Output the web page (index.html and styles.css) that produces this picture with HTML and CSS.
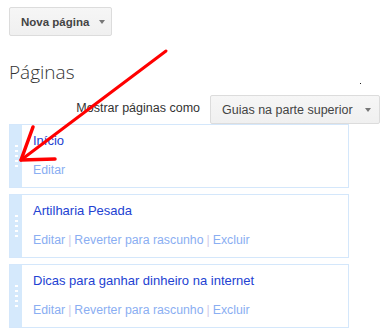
FILE: index.html
```html
<!DOCTYPE html>
<html lang="pt">

<head>
    <meta charset="UTF-8">
    <meta name="viewport" content="width=device-width, initial-scale=1.0">
    <title>Páginas</title>
    <link rel="stylesheet" href="styles.css">
</head>

<body>
    <div class="page">
        <button class="btn btn-new">Nova página <span class="caret"></span></button>

        <h2 class="heading">Páginas</h2>

        <div class="layout-row">
            <span class="layout-label">Mostrar páginas como</span>
            <button class="btn btn-layout">Guias na parte superior <span class="caret"></span></button>
        </div>

        <ul class="pages">
            <li class="page-item">
                <div class="handle"><i></i><i></i><i></i><i></i><i></i></div>
                <div class="page-body">
                    <a class="page-title" href="#">Início</a>
                    <div class="actions"><a href="#">Editar</a></div>
                </div>
            </li>
            <li class="page-item">
                <div class="handle"><i></i><i></i><i></i><i></i><i></i></div>
                <div class="page-body">
                    <a class="page-title" href="#">Artilharia Pesada</a>
                    <div class="actions">
                        <a href="#">Editar</a><span class="sep">|</span><a href="#">Reverter para rascunho</a><span class="sep">|</span><a href="#">Excluir</a>
                    </div>
                </div>
            </li>
            <li class="page-item">
                <div class="handle"><i></i><i></i><i></i><i></i><i></i></div>
                <div class="page-body">
                    <a class="page-title" href="#">Dicas para ganhar dinheiro na internet</a>
                    <div class="actions">
                        <a href="#">Editar</a><span class="sep">|</span><a href="#">Reverter para rascunho</a><span class="sep">|</span><a href="#">Excluir</a>
                    </div>
                </div>
            </li>
        </ul>
        <div class="dotted"></div>
    </div>

    <!-- red annotation arrow drawn over the screenshot -->
    <svg class="arrow" width="388" height="334" viewBox="0 0 388 334">
        <polyline points="166,51 21,160" fill="none" stroke="#f00" stroke-width="3" stroke-linecap="round" />
        <polyline points="33,127 21,160 55,159" fill="none" stroke="#f00" stroke-width="3.5" stroke-linecap="round" stroke-linejoin="round" />
        <rect x="360" y="83" width="1" height="1" fill="#222" />
    </svg>
</body>

</html>
```

FILE: styles.css
```css
body {
    margin: 0;
    background: #fff;
    font-family: "Liberation Sans", Arial, sans-serif;
}

.page {
    padding: 7px 8px 0 9px;
}

.btn {
    display: inline-flex;
    align-items: center;
    height: 29px;
    border: 1px solid #dcdcdc;
    border-radius: 2px;
    background: linear-gradient(#f6f6f6, #f0f0f0);
    color: #444;
    font-family: "Liberation Sans", Arial, sans-serif;
    cursor: pointer;
}

.btn-new {
    width: 103px;
    padding: 0 0 0 11px;
    font-size: 11.5px;
    font-weight: bold;
}

.btn-new .caret {
    margin-left: 10px;
}

.btn-layout {
    width: 170px;
    padding: 0 0 0 11px;
    font-size: 12.5px;
}

.btn-layout .caret {
    margin-left: 12px;
}

.caret {
    width: 0;
    height: 0;
    border-left: 3.5px solid transparent;
    border-right: 3.5px solid transparent;
    border-top: 4px solid #777;
}

.heading {
    margin: 24px 0 0;
    height: 24px;
    line-height: 24px;
    font-family: "Open Sans", sans-serif;
    font-size: 19px;
    font-weight: 300;
    color: #333;
}

.layout-row {
    display: flex;
    justify-content: flex-end;
    align-items: flex-start;
    margin-top: 11px;
}

.layout-label {
    padding-top: 6px;
    margin-right: 10px;
    font-size: 12.5px;
    color: #333;
}

.pages {
    list-style: none;
    margin: 0;
    padding: 0;
    width: 340px;
}

.page-item {
    display: flex;
    height: 64px;
    box-sizing: border-box;
    border: 1px solid #d4e7fb;
    margin-bottom: 6px;
}

.handle {
    width: 12px;
    background: #d5e9fc;
    display: flex;
    flex-direction: column;
    align-items: center;
    justify-content: center;
    gap: 3px;
}

.handle i {
    display: block;
    width: 3px;
    height: 2px;
    background: #fff;
}

.page-body {
    padding: 8px 0 0 11px;
    font-size: 13px;
    line-height: 16px;
}

.page-title {
    display: block;
    color: #2342d2;
    text-decoration: none;
}

.actions {
    margin-top: 13px;
    font-size: 12.3px;
}

.actions a {
    color: #8aaef2;
    text-decoration: none;
}

.sep {
    color: #d2cce8;
    margin: 0 3px;
}

.dotted {
    width: 340px;
    margin-top: 0;
    border-top: 1px dotted #d3cbe9;
}

.arrow {
    position: absolute;
    left: 0;
    top: 0;
    pointer-events: none;
}
```
